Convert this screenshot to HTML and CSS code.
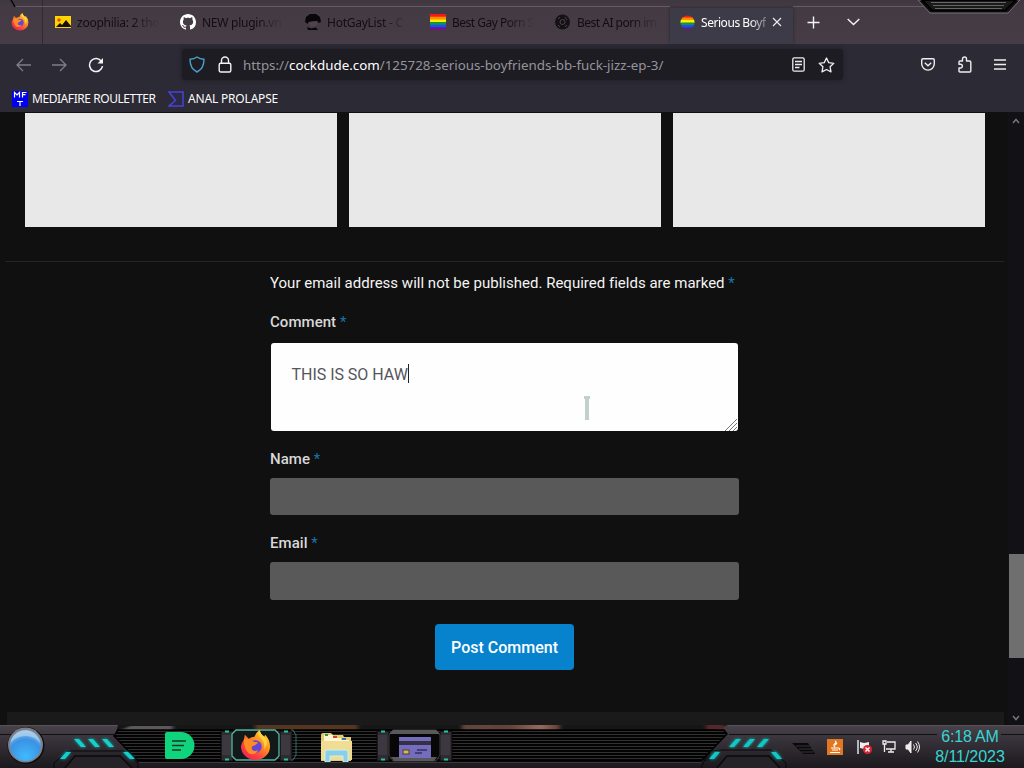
FILE: index.html
```html
<!DOCTYPE html>
<html lang="en">
<head>
<meta charset="utf-8">
<title>Serious Boyfriends</title>
<link rel="stylesheet" href="styles.css">
</head>
<body>
<header class="browser">
  <div class="tabs">
    <svg class="frame" width="1024" height="44" viewBox="0 0 1024 44" fill="none">
      <path d="M15 6.500H670M793 6.500H925" stroke="#655b66"/>
      <path d="M11 0l4 7" stroke="#050505" stroke-width="1.500"/>
      <path d="M918 0l12 13h78l12-13z" fill="#111" stroke="#777078"/>
      <path d="M922 0l10 10.500h73l11-10.500z" fill="#1a1a1b" stroke="#020202" stroke-width="2"/>
      <path d="M931 2.500h75M933 5.500h71M935 8.500h67" stroke="#666"/>
    </svg>
    <div class="pinned">
      <svg width="18" height="18" viewBox="0 0 32 32"><use href="#fox"/></svg>
    </div>
    <div class="tab">
      <svg width="16" height="12" viewBox="0 0 16 12"><path fill="#ffd400" d="M0 0h16v12H0z"/><circle cx="4" cy="4" r="1.700" fill="#f04a10"/><path fill="#17100a" d="M1 11l4-4 2 2 4-5 5 6v1z"/></svg>
      <span class="title">zoophilia: 2 tho</span>
    </div>
    <div class="tab">
      <svg width="16" height="16" viewBox="0 0 16 16"><path fill="#fff" d="M8 0C3.580 0 0 3.580 0 8c0 3.540 2.290 6.530 5.470 7.590.4.070.55-.17.550-.38 0-.19-.01-.82-.01-1.490-2.010.37-2.530-.49-2.690-.94-.09-.23-.48-.94-.82-1.130-.28-.15-.68-.52-.01-.53.630-.01 1.080.58 1.230.82.720 1.210 1.870.87 2.330.66.070-.52.280-.87.510-1.070-1.780-.2-3.640-.89-3.640-3.950 0-.87.310-1.590.82-2.150-.08-.2-.36-1.020.08-2.120 0 0 .67-.21 2.200.82.640-.18 1.320-.27 2-.27s1.360.09 2 .27c1.530-1.040 2.200-.82 2.200-.82.440 1.100.160 1.920.080 2.120.510.56.820 1.270.820 2.150 0 3.070-1.870 3.750-3.650 3.950.290.25.540.73.540 1.480 0 1.070-.01 1.930-.01 2.200 0 .210.150.460.550.380A8 8 0 0 0 16 8c0-4.420-3.580-8-8-8z"/></svg>
      <span class="title">NEW plugin.vn</span>
    </div>
    <div class="tab">
      <svg width="16" height="16" viewBox="0 0 16 16"><path fill="#080608" d="M0 8l1-5 4-3h6l4 3 1 5-3 1-1-2-8 1-1 2z"/><path d="M3.500 8l9-1v3l-3 2.500H6L3.500 10z" fill="#51434d"/><path fill="#080608" d="M2 13l4 1.500 5-1 2 2.500H3z"/></svg>
      <span class="title">HotGayList - C</span>
    </div>
    <div class="tab">
      <svg width="16" height="16" viewBox="0 0 16 16"><use href="#rainbow"/></svg>
      <span class="title long">Best Gay Porn S</span>
    </div>
    <div class="tab">
      <svg width="16" height="16" viewBox="0 0 16 16" fill="none"><circle cx="7.500" cy="8" r="7.500" fill="#151215"/><path d="M3 5l2-2M10 3l2 3M3 11l2 2M10 13l2-2" stroke="#4c434b"/><circle cx="7.500" cy="8" r="2.500" stroke="#4c434b"/></svg>
      <span class="title long">Best AI porn im</span>
    </div>
    <div class="tab active">
      <svg width="15" height="15" viewBox="0 0 16 16"><defs><clipPath id="round"><circle cx="8" cy="8" r="7.500"/></clipPath></defs><use href="#rainbow" clip-path="url(#round)"/></svg>
      <span class="title">Serious Boyf</span>
      <svg class="close" width="10" height="10" viewBox="0 0 10 10" fill="none" stroke="#eee" stroke-width="1.100"><path d="M1 1l8 8M9 1L1 9"/></svg>
    </div>
    <svg class="plus" width="13" height="13" viewBox="0 0 13 13" stroke="#f4f4f4" stroke-width="1.400"><path d="M6.500.5v12M.5 6.500h12"/></svg>
    <svg class="down" width="13" height="8" viewBox="0 0 13 8" fill="none" stroke="#f4f4f4" stroke-width="1.400"><path d="M.7 1l5.800 5.500L12.300 1"/></svg>
  </div>

  <div class="nav">
    <svg class="arrow" width="15" height="14" viewBox="0 0 15 14"><path d="M15 7H1M7 1L1 7l6 6"/></svg>
    <svg class="arrow" width="15" height="14" viewBox="0 0 15 14"><path d="M0 7h14M8 1l6 6-6 6"/></svg>
    <svg class="reload" width="16" height="16" viewBox="0 0 16 16" fill="none" stroke="#f5f5f5" stroke-width="1.500"><path d="M13.500 4.500A6.500 6.500 0 1 0 14.500 9"/><path d="M15 1v5.500H9.500z" fill="#f5f5f5" stroke="none"/></svg>
    <div class="address">
      <svg width="16" height="17" viewBox="0 0 16 17" fill="none" stroke="#4b9ecb" stroke-width="1.400"><path d="M8 1C6 2.500 3.500 3.200 1 3.300 1 9 2.500 13.500 8 16c5.500-2.500 7-7 7-12.700C12.500 3.200 10 2.500 8 1z"/></svg>
      <svg class="lock" width="14" height="17" viewBox="0 0 14 17" fill="none" stroke="#f2f2f2" stroke-width="1.400"><rect x="1.200" y="7.200" width="11.600" height="8.800" rx="1.500"/><path d="M3.500 7V4.500a3.500 3.500 0 0 1 7 0V7"/></svg>
      <span class="url">https://<b>cockdude.com</b>/125728-serious-boyfriends-bb-fuck-jizz-ep-3/</span>
      <svg class="reader" width="13" height="15" viewBox="0 0 13 15" fill="none" stroke="#eee" stroke-width="1.300"><rect x=".8" y=".8" width="11.400" height="13.400" rx="1.500"/><path d="M3 4.500h7M3 7.500h7M3 10.500h4.500"/></svg>
      <svg width="17" height="16" viewBox="0 0 17 16" fill="none" stroke="#eee" stroke-width="1.300" stroke-linejoin="round"><path d="M8.500 1l2.200 4.600 5.100.7-3.700 3.500.9 5.100-4.500-2.400L4 14.900l.9-5.100L1.200 6.300l5.100-.7z"/></svg>
    </div>
    <svg class="pocket" width="14" height="13" viewBox="0 0 14 13" fill="none" stroke="#eee" stroke-width="1.400"><path d="M2 .8h10q1.300 0 1.300 1.300v3.700a6.300 6.300 0 0 1-12.600 0V2.100Q.7.800 2 .8z"/><path d="M3.800 4.700L7 7.700l3.200-3"/></svg>
    <svg class="puzzle" width="15" height="17" viewBox="0 0 15 17" fill="none" stroke="#eee" stroke-width="1.400" stroke-linejoin="round"><path d="M5.500 5V3a2 2 0 0 1 4 0v2h3q1.300 0 1.300 1.300V15q0 1-1 1H3q-1 0-1-1v-3h1.500a1.900 1.900 0 0 0 0-3.800H2V6q0-1 1-1z"/></svg>
    <svg width="12" height="11" viewBox="0 0 12 11" stroke="#eee" stroke-width="1.400"><path d="M0 1h12M0 5.500h12M0 10h12"/></svg>
  </div>

  <div class="bookmarks">
    <svg width="16" height="16" viewBox="0 0 16 16" fill="none"><path fill="#0000f0" d="M0 0h16v16H0z"/><path d="M2.500 6.500V1.500L5 4l2.500-2.500v5M10.500 6.500v-5h4M10.500 3.700h3M5 10.500h6M8 10.500V15" stroke="#fff" stroke-width="1.200"/></svg>
    <span class="mf">MEDIAFIRE ROULETTER</span>
    <svg width="16" height="16" viewBox="0 0 16 16" fill="#2b2a45" stroke="#4a42d8" stroke-width="1.500"><path d="M1 1h14v14H1l6.500-5.500L1 1z"/></svg>
    <span class="ap">ANAL PROLAPSE</span>
  </div>
</header>

<main class="page">
  <section class="content">
    <div class="cards"><div></div><div></div><div></div></div>
    <form class="form">
      <p class="notes">Your email address will not be published. Required fields are marked <i>*</i></p>
      <label>Comment <i>*</i></label>
      <div class="comment">
        <span class="typed">THIS IS SO HAW</span>
        <svg class="pointer" width="8" height="26" viewBox="0 0 8 26"><path d="M1 1h6v3H6v21H2V4H1z" fill="#c3cfcc"/></svg>
        <svg class="grip" width="14" height="13" viewBox="0 0 14 13" stroke="#777" stroke-width="1"><path d="M1 13L13 1M5 13l8-8M9 13l4-4"/></svg>
      </div>
      <label>Name <i>*</i></label>
      <div class="field"></div>
      <label>Email <i>*</i></label>
      <div class="field second"></div>
      <button type="button">Post Comment</button>
    </form>
    <div class="bottom"></div>
  </section>
  <aside class="scroll">
    <svg width="8" height="6" viewBox="0 0 8 6"><path d="M1 5l3-3.500L7 5"/></svg>
    <div class="thumb"></div>
    <svg width="8" height="6" viewBox="0 0 8 6"><path d="M1 1l3 3.500L7 1"/></svg>
  </aside>
</main>

<footer class="taskbar">
  <svg class="skin" width="1024" height="43" viewBox="0 0 1024 43" fill="none">
    <defs>
      <linearGradient id="metal" x2="0" y2="1"><stop stop-color="#49434b"/><stop offset=".25" stop-color="#3c363e"/><stop offset="1" stop-color="#1b191d"/></linearGradient>
      <pattern id="lines" width="4" height="3" patternUnits="userSpaceOnUse"><path fill="#030303" d="M0 0h4v3H0z"/><path fill="#303030" d="M0 0h4v1H0z"/></pattern>
      <linearGradient id="skinTone"><stop stop-color="#60463c"/><stop offset=".5" stop-color="#65423b"/><stop offset=".8" stop-color="#956b60"/><stop offset="1" stop-color="#623c36"/></linearGradient>
      <filter id="glow" x="-50%" y="-50%" width="200%" height="200%"><feGaussianBlur stdDeviation="1.800"/></filter>
      <filter id="lamp" x="-10%" y="-10%" width="120%" height="120%"><feGaussianBlur stdDeviation=".5"/></filter>
      <filter id="soft"><feGaussianBlur stdDeviation="2 .5"/></filter>
      <g id="lights"><path d="M74 14h5l7 8h-5zM88 14h5l7 8h-5zM102 14h5l7 8h-5zM60 34l6-7h5l-6 7zM123 27h5l7 7h-5z"/></g>
      <g id="left">
        <path d="M0 9.500h116" stroke="#111013"/>
        <path d="M54 43v-5l14-12h56l14 12v5" stroke="#09090b"/>
        <path d="M65 43l10-12h45l12 12" fill="#252228" stroke="#0a0a0b" stroke-width="1.500"/>
        <use href="#lights" fill="#00b9b4" filter="url(#glow)"/>
        <use href="#lights" fill="#12cfca" filter="url(#lamp)"/>
      </g>
      <g id="clamp"><path fill="#302b32" stroke="#080808" d="M0 2h12v30H0z"/><path fill="#3d3740" d="M1 6h9v20H1z"/><path d="M4 2.500h4M4 30.500h4" stroke="#20c99d" stroke-width="2"/></g>
    </defs>
    <path fill="url(#metal)" d="M0 0h1024v43H0z"/>
    <path d="M0 .5h1024" stroke="#575058"/>
    <path d="M118 0h610l-16 6-2 30H138L116 7z" fill="#161617"/>
    <g filter="url(#soft)"><path fill="#5d585b" d="M130 1h43v4h-52z"/><path fill="#573421" d="M255 0h103v5H255z"/><path fill="url(#skinTone)" d="M462 0h98v6h-98z"/><path fill="#57282b" d="M706 0h18v4h-18z"/></g>
    <path d="M118 5h606l3 4-26 27H138L114 11z" fill="url(#lines)" stroke="#010101" stroke-width="1.500"/>
    <path d="M139 37.500h562" stroke="#3b383c"/>
    <use href="#left"/>
    <path d="M729 9.500h208M1001 9.500h23" stroke="#111013"/>
    <path d="M701 43l8-17 15-1h47l15 13v5" stroke="#09090b"/>
    <path d="M717 43l10-12h42l11 12" fill="#252228" stroke="#0a0a0b" stroke-width="1.500"/>
    <path id="rl" d="M729 22l7-8h5l-7 8zM743 22l7-8h5l-7 8zM757 22l7-8h5l-7 8zM709 34l6-7h5l-6 7zM771 27h5l6 7h-5z" fill="#10c8c5"/>
    <use href="#rl" filter="url(#glow)"/>
    <path d="M792 18h16l7 11h-12z" fill="#09090a"/><path d="M796 21h14M799 24h13M801 27h12" stroke="#39343c"/>
    <circle cx="26" cy="20.500" r="18.500" fill="#0e0e10"/>
    <circle cx="25.500" cy="20" r="17.500" fill="#817f86"/>
    <use href="#clamp" x="221" y="4"/><use href="#clamp" x="280" y="4"/>
    <path d="M232 9l4-4h39l4 4v22l-4 4h-39l-4-4z" fill="#121918" stroke="#52b8a2" stroke-width="1.300"/>
    <path d="M291 5h2l3 5v20l-3 5h-2" stroke="#2a7163"/>
    <use href="#clamp" x="377" y="4"/><use href="#clamp" x="440" y="4"/>
    <path d="M389 10l4-5h43l4 5v20l-4 6h-43l-4-6z" fill="#070707" stroke="#3e3e40"/><path d="M389 9l4-4h43l4 4zM391 32h46l-3 4h-40z" fill="#59595b"/>
  </svg>
  <svg class="orb" width="33" height="33" viewBox="0 0 33 33"><defs><radialGradient id="blue" cx=".5" cy=".85" r=".9"><stop stop-color="#40baff"/><stop offset=".6" stop-color="#3b92e2"/><stop offset="1" stop-color="#a4d2f5"/></radialGradient></defs><circle cx="16.500" cy="16.500" r="15.500" fill="url(#blue)"/><path d="M1.500 14A15 15 0 0 1 31 14Q26 7 16.500 7T1.500 14z" fill="#bfd5e8" opacity=".65"/></svg>
  <svg class="note" width="30" height="27" viewBox="0 0 30 27"><path fill="#10d47c" d="M2 0h14a13.500 13.500 0 0 1 0 27H2q-2 0-2-2V2q0-2 2-2z"/><path d="M7 9h14M7 13.500h12M7 18h9" stroke="#143628" stroke-width="1.700"/></svg>
  <svg class="fox" width="31" height="31" viewBox="0 0 32 32"><defs>
    <linearGradient id="flame" x1="1" y1="0" x2=".2" y2="1"><stop stop-color="#ffe34a"/><stop offset=".4" stop-color="#ff9720"/><stop offset=".75" stop-color="#fb4142"/><stop offset="1" stop-color="#ec2059"/></linearGradient>
    <g id="fox"><path fill="url(#flame)" d="M4 10l1-5 4 4q3-2 6-2 1-4 5-7 1 4 5 7l1-2q5 5 5 12a15 14 0 0 1-30 0Q1 14 4 10z"/><circle cx="16" cy="17" r="6.500" fill="#6545d5"/><path fill="#ff8c20" d="M4 9q6 0 10 3l5 1-4 3q-3 0-3 3 1 4 7 2-4 6-10 3Q4 20 4 9z"/><path fill="#ffd33d" d="M20 0q-3 5 1 8 5 4 4 12 6-9 0-13-4-3-5-7z"/></g>
    <g id="rainbow"><path fill="#f21b16" d="M0 0h16v3H0z"/><path fill="#ff8d00" d="M0 2.700h16v3H0z"/><path fill="#ffee00" d="M0 5.400h16v3H0z"/><path fill="#12963a" d="M0 8h16v3H0z"/><path fill="#194dff" d="M0 10.700h16v3H0z"/><path fill="#6e158a" d="M0 13.300h16V16H0z"/></g>
  </defs><use href="#fox"/></svg>
  <svg class="folder" width="33" height="29" viewBox="0 0 33 29"><path fill="#e4ca70" d="M1 2q0-2 2-2h8l2 2h10l1 2h7v24H1z"/><path fill="#fff7d4" d="M4 2h9v3h8v2h8v4H4z"/><path d="M5 2h3" stroke="#289a48" stroke-width="2"/><path d="M13 4h4" stroke="#cc4334" stroke-width="2"/><path d="M22 6h4" stroke="#2878b8" stroke-width="2"/><path fill="#f1dc93" d="M1 8h31v19H1z"/><path d="M5 29V19q0-2 2-2h19q2 0 2 2v10h-5v-6H10v6z" fill="#8bcfe4" stroke="#c9f0f6"/></svg>
  <svg class="card" width="32" height="21" viewBox="0 0 32 21"><path fill="#746dbd" d="M0 0h32v21H0z"/><path fill="#363047" d="M0 4h32v4H0z"/><rect x="4" y="13" width="6" height="4" fill="#d9b553" stroke="#4c3d32"/><path d="M18 13h10M16 16h7" stroke="#353057" stroke-width="1.300"/></svg>
  <svg class="java" width="16" height="16" viewBox="0 0 16 16" fill="none"><path fill="#e27720" d="M0 0h16v16H0z"/><path d="M8 2c4 2-4 3 0 6M10 4L8 6M4 9h7M5 11h6M3 13.500h10M11 9q3 0 1 2" stroke="#fff" stroke-width="1.200"/></svg>
  <svg class="flag" width="16" height="15" viewBox="0 0 16 15" fill="none"><path d="M1 0v14" stroke="#eee" stroke-width="1.400"/><path fill="#eee" d="M3 2l4 1 5-1v6l-5 1-4-1z"/><circle cx="10.500" cy="9.500" r="4.500" fill="#d52632"/><path d="M8.500 7.500l4 4m0-4l-4 4" stroke="#fff" stroke-width="1.400"/></svg>
  <svg class="net" width="14" height="13" viewBox="0 0 14 13" fill="none" stroke="#eee" stroke-width="1.300"><path d="M5 2h8v7H4M9 9v3M6 12h6M1 1h3v3H1zM2.500 4v8"/></svg>
  <svg class="sound" width="15" height="14" viewBox="0 0 15 14" fill="none" stroke="#eee"><path fill="#eee" d="M1 5h2l3-4v12L3 9H1z"/><path d="M8.500 4.500q2 2.500 0 5M10.500 3q3.500 4 0 8M12.500 1.500q4 5.500 0 11"/></svg>
  <div class="clock"><span class="time">6:18 AM</span><span class="date">8/11/2023</span></div>
</footer>
</body>
</html>
```
FILE: styles.css
```css
* { box-sizing: border-box; }
body { margin: 0; width: 1024px; height: 768px; overflow: hidden; background: #101010; font-family: "Noto Sans", sans-serif; }
svg { display: block; flex: none; }
.browser { height: 112px; background: #2c2a34; }
.tabs { position: relative; height: 44px; display: flex; align-items: center; background: linear-gradient(#3f3840, #443a44 16%, #463c46); }
.frame { position: absolute; left: 0; top: 0; }
.pinned { width: 43px; height: 44px; padding: 13px 0 0 11px; border-right: 1px solid #302832; margin-right: 2px; }
.tab { position: relative; width: 125px; height: 36px; margin-top: 8px; padding: 0 10px 8px 10px; display: flex; align-items: center; gap: 6px; flex: none; font-size: 12px; color: #110d12; }
.title { flex: 1; white-space: nowrap; letter-spacing: -.25px; mask-image: linear-gradient(90deg, #000 65%, transparent); }
.title.long { letter-spacing: -.5px; }
.active { width: 123px; padding-right: 12px; background: #3e3b48; color: #fff; box-shadow: 0 0 3px #27232d; }
.active .title { letter-spacing: -.45px; mask-image: linear-gradient(90deg, #000 75%, rgba(0, 0, 0, .3)); }
.plus { margin-left: 14px; }
.down { margin-left: 27px; }
.nav { height: 41px; display: flex; align-items: center; padding-left: 16px; }
.arrow { fill: none; stroke: #807e87; stroke-width: 1.3; margin-right: 21px; }
.address { width: 661px; height: 31px; margin-left: 78px; padding: 0 8px 0 7px; display: flex; align-items: center; background: #1d1c23; border-radius: 4px; box-shadow: 0 0 4px #1d1c23; }
.lock { margin-left: 13px; }
.url { flex: 1; margin-left: 11px; color: #96949b; font-size: 13.35px; white-space: nowrap; }
.url b { font-weight: 400; color: #fff; }
.reader { margin-right: 13px; }
.pocket { margin-left: 78px; }
.puzzle { margin: 0 22px; }
.bookmarks { height: 27px; display: flex; align-items: center; padding-left: 12px; font-size: 12px; color: #fbfbfb; white-space: nowrap; }
.mf { width: 124px; margin: 0 12px 0 4px; letter-spacing: -.44px; }
.ap { margin-left: 4px; letter-spacing: -.18px; }
.page { height: 613px; display: flex; background: #101010; font-family: Roboto, sans-serif; }
.content { width: 1008px; display: flex; flex-direction: column; }
.cards { height: 150px; margin: 0 4px 0 5px; padding: 1px 19px 35px 20px; display: flex; gap: 12px; border-bottom: 1px solid #242424; }
.cards div { width: 312px; height: 114px; background: #e8e8e8; }
.form { width: 469px; margin-left: 270px; display: flex; flex-direction: column; color: #d8d8d8; font-size: 15px; line-height: 20px; }
.notes { margin: 11px 0 19px; color: #f4f4f4; white-space: nowrap; letter-spacing: .012px; }
.form i { font-style: normal; font-weight: 400; color: #1774ad; }
label { font-weight: 500; height: 20px; letter-spacing: .05px; }
.comment { position: relative; width: 467px; height: 88px; margin: 11px 0 18px 1px; padding: 18px 20.5px; background: #fefefe; border-radius: 3px; color: #55555c; font-size: 16px; line-height: 24px; }
.typed { display: inline-block; height: 19px; line-height: 22px; border-right: 1px solid #222; margin-top: 3px; letter-spacing: -.03px; }
.pointer { position: absolute; left: 312px; top: 52px; }
.grip { position: absolute; right: 0; bottom: 0; }
.field { height: 37px; margin: 9px 0 18px; background: #595959; border-radius: 3px; }
.field.second { height: 38px; margin-bottom: 24px; }
button { width: 139px; height: 46px; margin: 0 0 0 165px; padding: 0; border: 0; border-radius: 4px; background: #0783cd; color: #fff; font: 500 16px Roboto, sans-serif; }
.bottom { height: 13px; margin: auto 4px 0 7px; background: #1a1a1a; }
.scroll { width: 16px; display: flex; flex-direction: column; align-items: center; padding: 6px 0 4px; background: #121116; }
.scroll svg { fill: none; stroke: #77757c; stroke-width: 1.5; }
.thumb { width: 15px; height: 104px; margin: 430px 0 auto 1px; background: #6f6f6f; }
.taskbar { position: relative; height: 43px; display: flex; align-items: center; padding-left: 9px; }
.taskbar > svg { position: relative; }
.taskbar > .skin { position: absolute; left: 0; top: 0; }
.orb { margin-top: -2px; }
.note { margin: -2px 0 0 123px; }
.fox { margin: -3px 0 0 45px; }
.folder { margin: 2px 0 0 49px; }
.card { margin: 1px 0 0 46px; }
.java { margin: 1px 0 0 396px; }
.flag { margin: 1px 0 0 14px; }
.net { margin: 0 0 0 9px; }
.sound { margin: 1px 0 0 9px; }
.clock { position: relative; width: 70px; margin-left: 15px; display: flex; flex-direction: column; align-items: center; font: 16px/20px "Liberation Sans", sans-serif; color: #37d6d3; }
.time { letter-spacing: -.2px; }
.date { letter-spacing: -.05px; }
```
